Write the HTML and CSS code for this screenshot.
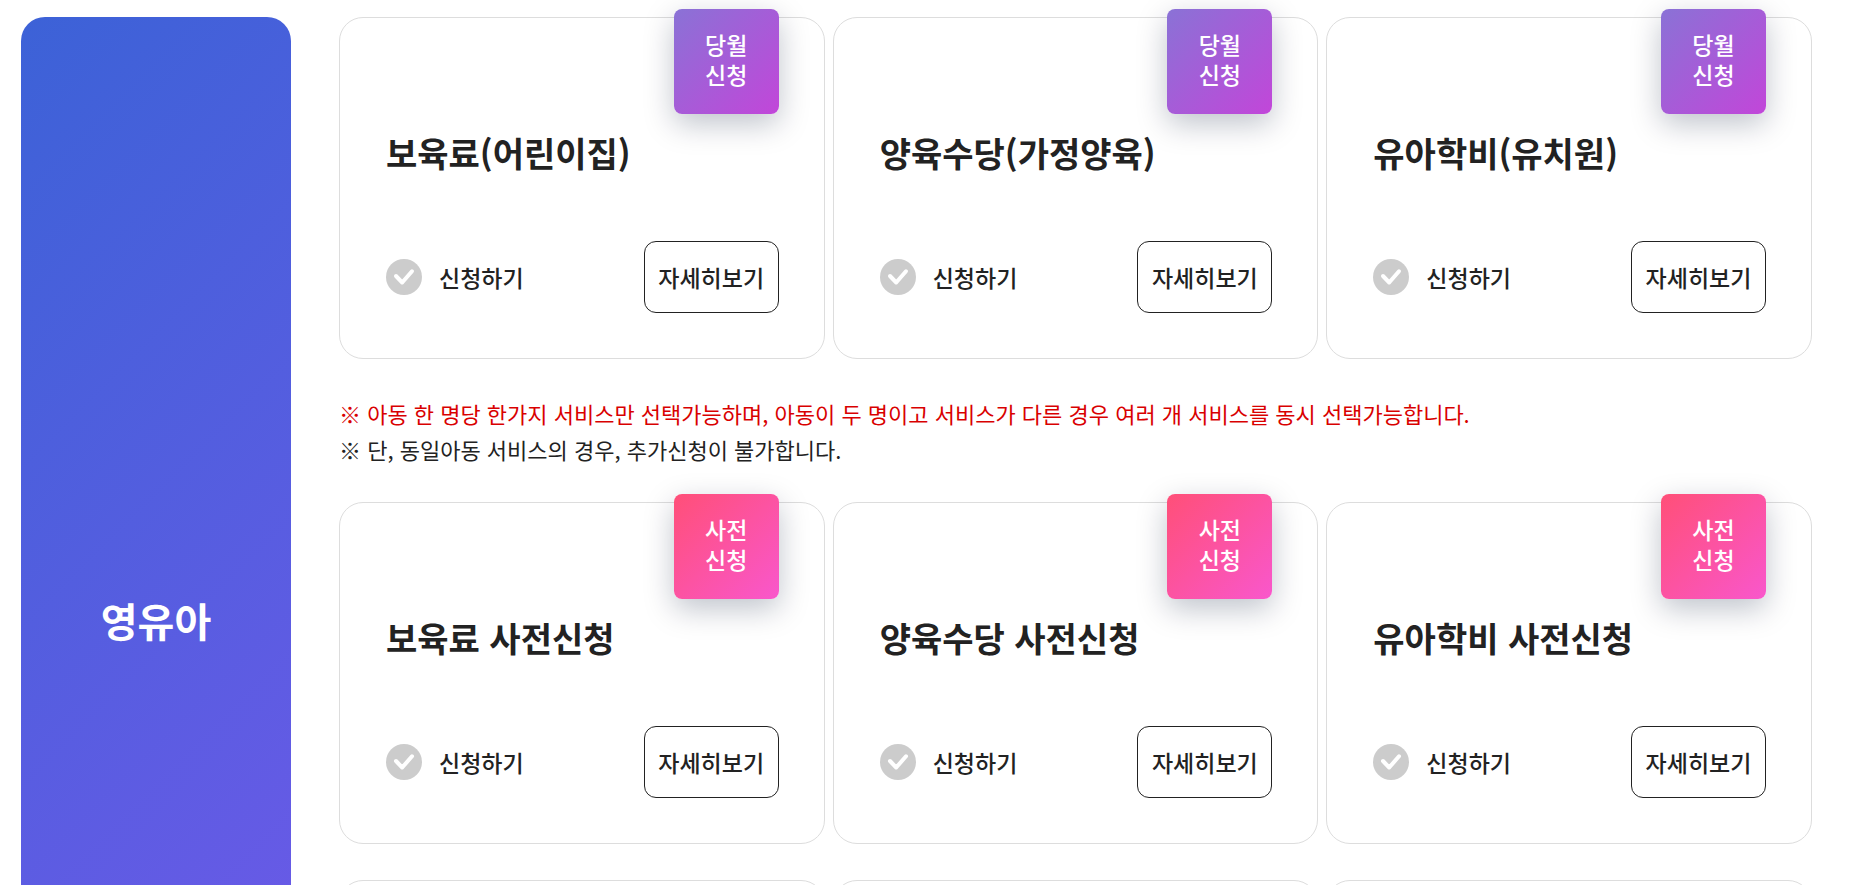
FILE: index.html
```html
<!DOCTYPE html>
<html lang="ko">
<head>
  <meta charset="UTF-8">
  <meta name="viewport" content="width=device-width, initial-scale=1">
  <title>영유아</title>
  <link rel="stylesheet" href="styles.css">
</head>
<body>
  <!-- 체크 아이콘 -->
  <svg class="sprite" width="0" height="0" aria-hidden="true">
    <symbol id="check" viewBox="0 0 36 36">
      <circle cx="18" cy="18" r="18"/>
      <path d="M10 17l6.2 6.5L26 12.3" fill="none" stroke="#fff" stroke-width="4" stroke-linecap="round" stroke-linejoin="round"/>
    </symbol>
  </svg>

  <div class="container">
    <div class="category">
      <h2>영유아</h2>
    </div>

    <div class="services">
      <div class="row">
        <div class="card">
          <span class="badge month">당월<br>신청</span>
          <h3>보육료(어린이집)</h3>
          <div class="actions">
            <input type="checkbox" id="service1">
            <label for="service1"><svg class="icon"><use href="#check"/></svg>신청하기</label>
            <button type="button">자세히보기</button>
          </div>
        </div>
        <div class="card">
          <span class="badge month">당월<br>신청</span>
          <h3>양육수당(가정양육)</h3>
          <div class="actions">
            <input type="checkbox" id="service2">
            <label for="service2"><svg class="icon"><use href="#check"/></svg>신청하기</label>
            <button type="button">자세히보기</button>
          </div>
        </div>
        <div class="card">
          <span class="badge month">당월<br>신청</span>
          <h3>유아학비(유치원)</h3>
          <div class="actions">
            <input type="checkbox" id="service3">
            <label for="service3"><svg class="icon"><use href="#check"/></svg>신청하기</label>
            <button type="button">자세히보기</button>
          </div>
        </div>
      </div>

      <div class="notes">
        <p class="red">※ 아동 한 명당 한가지 서비스만 선택가능하며, 아동이 두 명이고 서비스가 다른 경우 여러 개 서비스를 동시 선택가능합니다.</p>
        <p>※ 단, 동일아동 서비스의 경우, 추가신청이 불가합니다.</p>
      </div>

      <div class="row">
        <div class="card">
          <span class="badge advance">사전<br>신청</span>
          <h3>보육료 사전신청</h3>
          <div class="actions">
            <input type="checkbox" id="service4">
            <label for="service4"><svg class="icon"><use href="#check"/></svg>신청하기</label>
            <button type="button">자세히보기</button>
          </div>
        </div>
        <div class="card">
          <span class="badge advance">사전<br>신청</span>
          <h3>양육수당 사전신청</h3>
          <div class="actions">
            <input type="checkbox" id="service5">
            <label for="service5"><svg class="icon"><use href="#check"/></svg>신청하기</label>
            <button type="button">자세히보기</button>
          </div>
        </div>
        <div class="card">
          <span class="badge advance">사전<br>신청</span>
          <h3>유아학비 사전신청</h3>
          <div class="actions">
            <input type="checkbox" id="service6">
            <label for="service6"><svg class="icon"><use href="#check"/></svg>신청하기</label>
            <button type="button">자세히보기</button>
          </div>
        </div>
      </div>

      <div class="row last">
        <div class="card"></div>
        <div class="card"></div>
        <div class="card"></div>
      </div>
    </div>
  </div>
</body>
</html>
```
FILE: styles.css
```css
* {
  box-sizing: border-box;
}

body {
  margin: 0;
  background-color: #fff;
  color: #222;
  font-family: "Noto Sans CJK KR", "Noto Sans", sans-serif;
  font-size: 23px;
  font-weight: 400;
}

h2, h3, p {
  margin: 0;
}

.sprite {
  position: absolute;
}

.container {
  display: flex;
  gap: 48px;
  padding: 17px 49px 17px 21px;
}

.category {
  display: flex;
  align-items: center;
  justify-content: center;
  flex: 0 0 270px;
  border-radius: 24px;
  background: linear-gradient(135deg, #3c62d7, #7358ea);
  color: #fff;
}

.category h2 {
  font-size: 40px;
  font-weight: 700;
  line-height: 48px;
}

.services {
  flex: 1;
  min-width: 0;
}

.row {
  display: grid;
  grid-template-columns: repeat(3, 1fr);
  gap: 8px;
}

.row.last {
  margin-top: 36px;
}

.card {
  position: relative;
  min-height: 342px;
  padding: 111px 45px 45px 46px;
  border: 1px solid #ddd;
  border-radius: 24px;
}

.card h3 {
  margin-bottom: 64px;
  font-size: 34px;
  font-weight: 700;
  line-height: 48px;
}

.badge {
  position: absolute;
  top: -9px;
  right: 45px;
  display: flex;
  align-items: center;
  justify-content: center;
  width: 105px;
  height: 105px;
  padding-bottom: 5px;
  border-radius: 8px;
  box-shadow: 0 10px 30px rgba(0, 20, 50, 0.25);
  color: #fff;
  font-weight: 500;
  line-height: 30px;
  text-align: center;
}

.badge.month {
  background: linear-gradient(135deg, #8a72d6, #c246d9);
}

.badge.advance {
  background: linear-gradient(135deg, #ff4f78, #f957cc);
}

.actions {
  display: flex;
  align-items: center;
}

.actions input {
  position: absolute;
  opacity: 0;
}

.actions label {
  display: flex;
  align-items: center;
  gap: 17px;
  font-weight: 500;
  cursor: pointer;
}

.icon {
  width: 36px;
  height: 36px;
  fill: #ccc;
}

.actions input:checked + label .icon {
  fill: #3c62d7;
}

.actions button {
  min-width: 135px;
  height: 72px;
  margin-left: auto;
  padding: 0 12px;
  border: 1px solid #222;
  border-radius: 12px;
  background-color: #fff;
  color: #222;
  font: inherit;
  font-weight: 500;
  cursor: pointer;
}

.notes {
  padding: 36px 0 35px;
  font-size: 22px;
  line-height: 36px;
}

.notes .red {
  color: #d90000;
}
```
